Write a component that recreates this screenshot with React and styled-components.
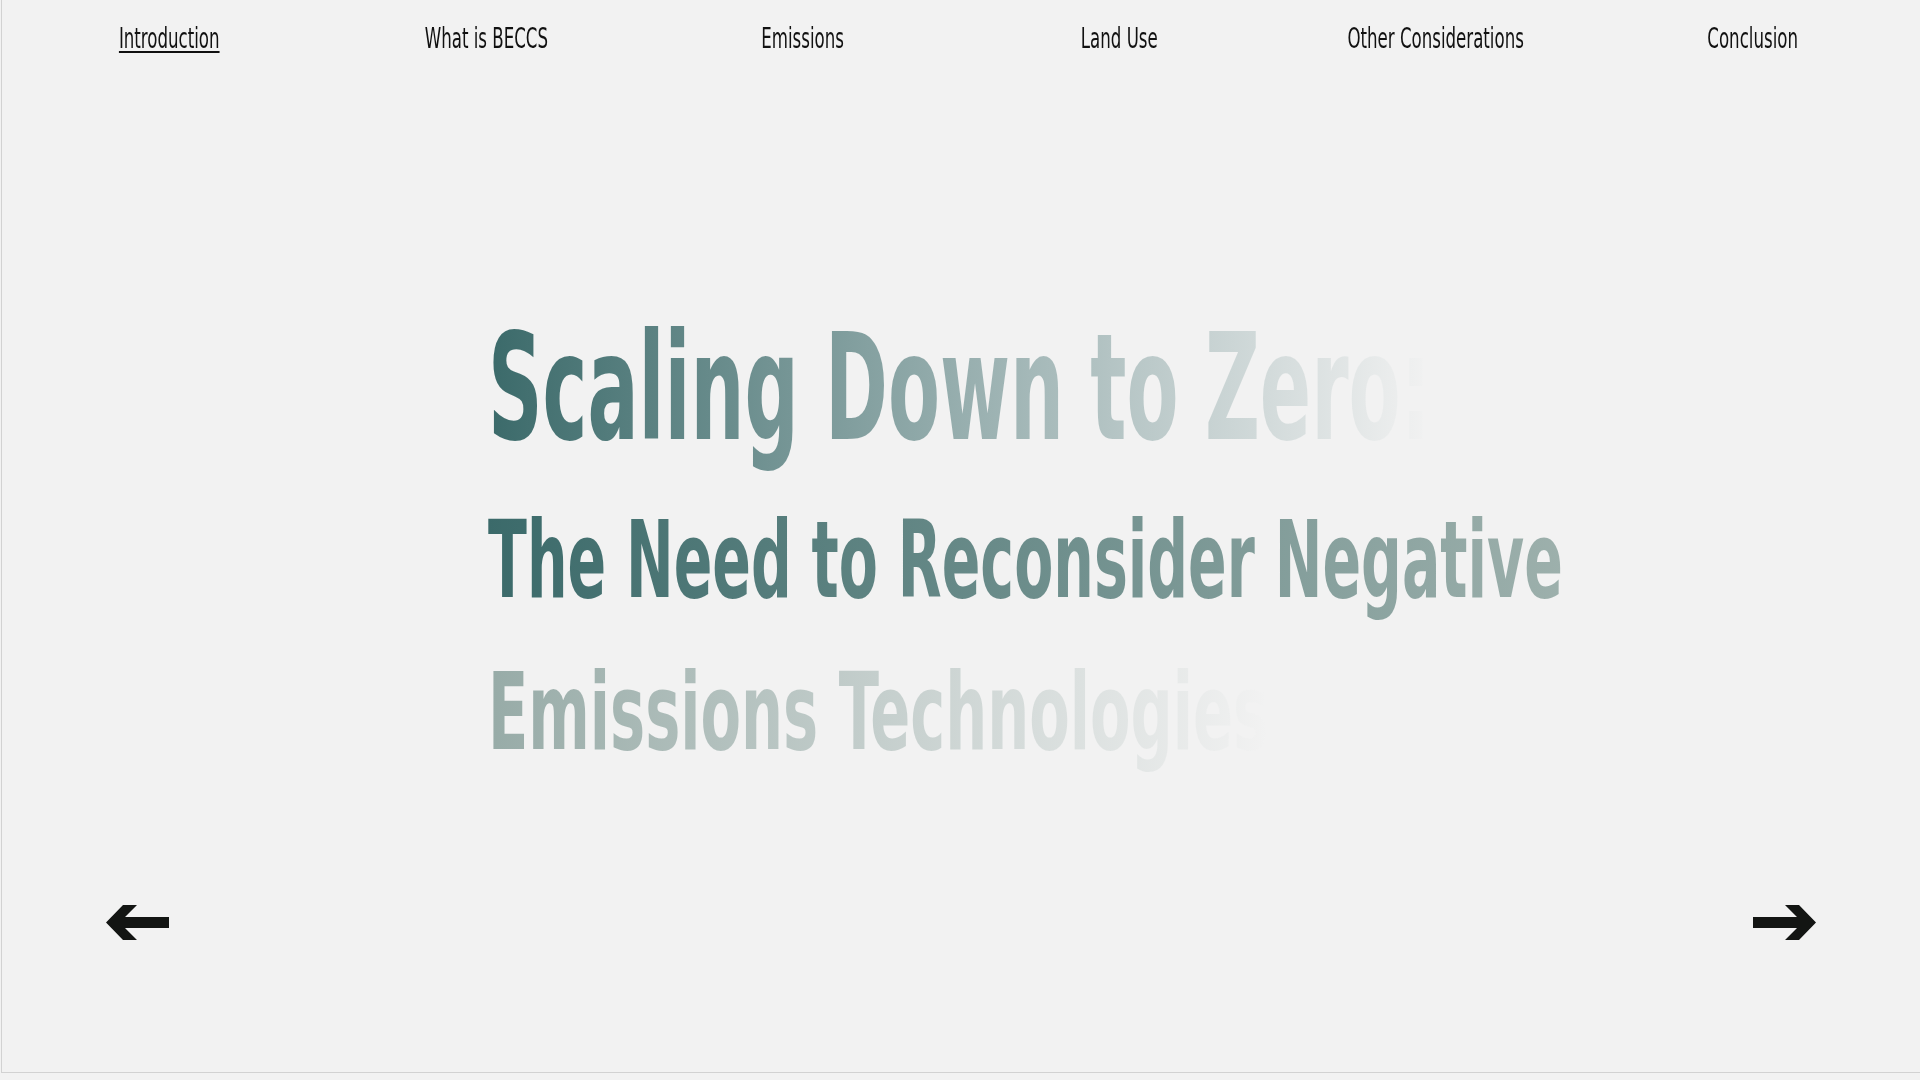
import React from "react";
import styled, { createGlobalStyle } from "styled-components";

const GlobalStyle = createGlobalStyle`
  body {
    margin: 0;
    background: #f2f2f2;
    font-family: "DejaVu Sans Condensed", "DejaVu Sans", sans-serif;
    color: #111;
  }
`

const Frame = styled.div`
  box-sizing: border-box;
  height: 1073px;
  margin-left: 1px;
  border-left: 1px solid #d2d2d2;
  border-bottom: 1px solid #d2d2d2;
  display: flex;
  flex-direction: column;
`
const Nav = styled.nav`
  display: grid;
  grid-template-columns: repeat(6, 1fr);
  padding: 21px 9px 0 9px;
`
const NavItem = styled.a`
  justify-self: center;
  display: inline-block;
  font-size: 28px;
  line-height: 36px;
  color: #111;
  text-decoration: ${p => (p.$active ? "underline" : "none")};
  text-decoration-thickness: 2px;
  text-underline-offset: 3px;
  transform: scaleX(0.66);
  white-space: nowrap;
  cursor: pointer;
`
const Hero = styled.header`
  display: flex;
  flex-direction: column;
  align-items: flex-start;
  padding: 235px 0 0 486px;
`
const Line = styled.span`
  display: inline-block;
  font-weight: bold;
  white-space: nowrap;
  font-size: ${p => p.$size}px;
  line-height: ${p => p.$lh}px;
  transform: scaleX(${p => p.$squeeze});
  transform-origin: left center;
  background: linear-gradient(to right, ${p => p.$from}, ${p => p.$to});
  -webkit-background-clip: text;
  background-clip: text;
  color: transparent;
`
const Controls = styled.div`
  margin-top: auto;
  display: flex;
  justify-content: space-between;
  padding: 0 104px 132px 104px;
`
const ArrowButton = styled.button`
  border: none;
  background: none;
  padding: 0;
  cursor: pointer;
  line-height: 0;
`

const Arrow = ({ flip }) => (
  <svg width="63" height="35" viewBox="0 0 63 35" style={flip ? { transform: "scaleX(-1)" } : null}>
    <polygon
      points="0,17.5 17,0 31,0 19,12 63,12 63,23 19,23 31,35 17,35"
      fill="#131513"
    />
  </svg>
)

const links = ["Introduction", "What is BECCS", "Emissions", "Land Use", "Other Considerations", "Conclusion"]

export default function App() {
  return (
    <>
      <GlobalStyle />
      <Frame>
        <Nav>
          {links.map((l, i) => (
            <NavItem key={l} $active={i === 0}>{l}</NavItem>
          ))}
        </Nav>
        <Hero>
          <Line $size={148} $lh={192} $squeeze={0.569} $from="#3b6a6a" $to="#f2f2f2">
            Scaling Down to Zero:
          </Line>
          <Line $size={107} $lh={152} $squeeze={0.592} $from="#3b6a6a" $to="#9db0ac">
            The Need to Reconsider Negative
          </Line>
          <Line $size={107} $lh={152} $squeeze={0.613} $from="#97aba7" $to="#f2f2f2">
            Emissions Technologies
          </Line>
        </Hero>
        <Controls>
          <ArrowButton aria-label="previous"><Arrow /></ArrowButton>
          <ArrowButton aria-label="next"><Arrow flip /></ArrowButton>
        </Controls>
      </Frame>
    </>
  );
}
